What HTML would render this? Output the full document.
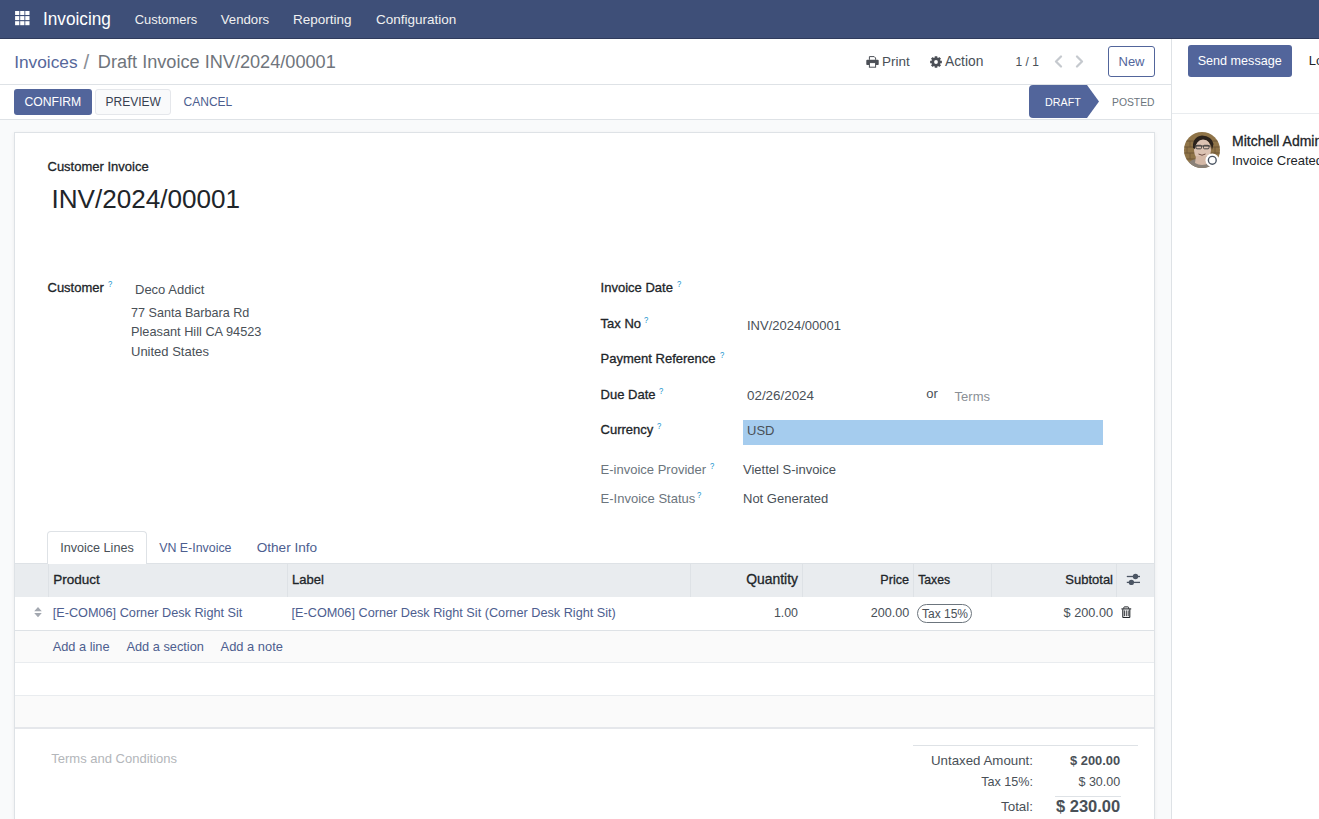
<!DOCTYPE html>
<html><head><meta charset="utf-8"><style>
html,body{margin:0;padding:0;width:1319px;height:819px;overflow:hidden;background:#fff;font-family:"Liberation Sans", sans-serif;}
.t{position:absolute;line-height:1;white-space:nowrap;}
</style></head><body>
<div style="position:absolute;left:0px;top:0px;width:1319px;height:38px;background:#3e4f78;"></div>
<div style="position:absolute;left:0px;top:38px;width:1319px;height:1px;background:#2f3b5c;"></div>
<svg style="position:absolute;left:15px;top:11px" width="16" height="15" viewBox="0 0 16 15"><rect x="0.1" y="0" width="4.2" height="4" fill="#fff"/><rect x="0.1" y="5.1" width="4.2" height="4" fill="#fff"/><rect x="0.1" y="10.2" width="4.2" height="4" fill="#fff"/><rect x="5.2" y="0" width="4.2" height="4" fill="#fff"/><rect x="5.2" y="5.1" width="4.2" height="4" fill="#fff"/><rect x="5.2" y="10.2" width="4.2" height="4" fill="#fff"/><rect x="10.3" y="0" width="4.2" height="4" fill="#fff"/><rect x="10.3" y="5.1" width="4.2" height="4" fill="#fff"/><rect x="10.3" y="10.2" width="4.2" height="4" fill="#fff"/></svg>
<div class="t" style="left:42.60px;top:10px;font-size:18px;font-weight:400;color:#ffffff;transform:scaleX(0.955);transform-origin:0 0;">Invoicing</div>
<div class="t" style="left:134.80px;top:14px;font-size:12.9px;font-weight:400;color:#f1f1f1;">Customers</div>
<div class="t" style="left:220.80px;top:13px;font-size:13.2px;font-weight:400;color:#f1f1f1;">Vendors</div>
<div class="t" style="left:293.00px;top:13px;font-size:13.5px;font-weight:400;color:#f1f1f1;">Reporting</div>
<div class="t" style="left:376.00px;top:13px;font-size:13.5px;font-weight:400;color:#f1f1f1;">Configuration</div>
<div style="position:absolute;left:0px;top:39px;width:1171px;height:45px;background:#fff;"></div>
<div style="position:absolute;left:0px;top:84px;width:1171px;height:1px;background:#dee2e6;"></div>
<div style="position:absolute;left:0px;top:85px;width:1171px;height:34px;background:#fff;"></div>
<div style="position:absolute;left:0px;top:119px;width:1171px;height:1px;background:#dee2e6;"></div>
<div class="t" style="left:14.20px;top:54px;font-size:17.3px;font-weight:400;color:#56679a;">Invoices</div>
<div class="t" style="left:83.60px;top:52px;font-size:20.5px;font-weight:400;color:#8a8f96;">/</div>
<div class="t" style="left:97.80px;top:53px;font-size:18.15px;font-weight:400;color:#6f757c;">Draft Invoice INV/2024/00001</div>
<div class="t" style="left:881.90px;top:55px;font-size:13.5px;font-weight:400;color:#495057;">Print</div>
<div class="t" style="left:945.00px;top:55px;font-size:13.8px;font-weight:400;color:#495057;">Action</div>
<div class="t" style="left:1015.60px;top:56px;font-size:12px;font-weight:400;color:#495057;">1 / 1</div>
<div style="position:absolute;left:1108px;top:46px;width:47px;height:31px;border:1px solid #52659b;border-radius:3px;box-sizing:border-box;background:#fff;"></div>
<div class="t" style="left:1131.50px;top:55px;font-size:13px;font-weight:400;color:#52659b;transform:translateX(-50%);">New</div>
<div style="position:absolute;left:14px;top:89px;width:78px;height:26px;background:#52659b;border-radius:3px;"></div>
<div class="t" style="left:24.40px;top:96px;font-size:12.2px;font-weight:400;color:#fff;">CONFIRM</div>
<div style="position:absolute;left:95px;top:89px;width:76px;height:26px;background:#f9fafb;border:1px solid #e5e7eb;border-radius:3px;box-sizing:border-box;"></div>
<div class="t" style="left:105.60px;top:96px;font-size:12px;font-weight:400;color:#374151;">PREVIEW</div>
<div class="t" style="left:183.60px;top:96px;font-size:12px;font-weight:400;color:#4d5e8f;">CANCEL</div>
<svg style="position:absolute;left:1029px;top:85px" width="72" height="33"><path d="M0 4 Q0 0 4 0 L58 0 L70 16.5 L58 33 L4 33 Q0 33 0 29 Z" fill="#52659b"/></svg>
<div class="t" style="left:1044.60px;top:97px;font-size:11.5px;font-weight:400;color:#fff;transform:scaleX(0.935);transform-origin:0 0;">DRAFT</div>
<div class="t" style="left:1111.60px;top:97px;font-size:11.5px;font-weight:400;color:#6c757d;transform:scaleX(0.9);transform-origin:0 0;">POSTED</div>
<div style="position:absolute;left:0px;top:120px;width:1171px;height:699px;background:#f9fafb;"></div>
<div style="position:absolute;left:14px;top:132px;width:1141px;height:687px;background:#fff;border:1px solid #dee2e6;border-bottom:none;box-sizing:border-box;box-shadow:0 1px 4px rgba(0,0,0,0.06);"></div>
<div class="t" style="left:47.50px;top:160px;font-size:13px;font-weight:400;color:#212529;-webkit-text-stroke:0.3px #212529;">Customer Invoice</div>
<div class="t" style="left:51.50px;top:186px;font-size:26.1px;font-weight:400;color:#212529;">INV/2024/00001</div>
<div class="t" style="left:47.50px;top:281px;font-size:13px;font-weight:400;color:#212529;-webkit-text-stroke:0.3px #212529;">Customer</div>
<div class="t" style="left:107.80px;top:280px;font-size:9px;font-weight:400;color:#1592cc;transform:scaleX(0.85);transform-origin:0 0;">?</div>
<div class="t" style="left:135.00px;top:283px;font-size:13px;font-weight:400;color:#495057;">Deco Addict</div>
<div class="t" style="left:131.00px;top:307px;font-size:12.6px;font-weight:400;color:#495057;">77 Santa Barbara Rd</div>
<div class="t" style="left:131.00px;top:326px;font-size:12.75px;font-weight:400;color:#495057;">Pleasant Hill CA 94523</div>
<div class="t" style="left:131.00px;top:345px;font-size:13px;font-weight:400;color:#495057;">United States</div>
<div class="t" style="left:600.60px;top:281px;font-size:13px;font-weight:400;color:#212529;-webkit-text-stroke:0.3px #212529;">Invoice Date</div>
<div class="t" style="left:676.50px;top:280px;font-size:9px;font-weight:400;color:#1592cc;transform:scaleX(0.85);transform-origin:0 0;">?</div>
<div class="t" style="left:600.60px;top:317px;font-size:13px;font-weight:400;color:#212529;-webkit-text-stroke:0.3px #212529;">Tax No</div>
<div class="t" style="left:643.60px;top:316px;font-size:9px;font-weight:400;color:#1592cc;transform:scaleX(0.85);transform-origin:0 0;">?</div>
<div class="t" style="left:600.60px;top:352px;font-size:13px;font-weight:400;color:#212529;-webkit-text-stroke:0.3px #212529;">Payment Reference</div>
<div class="t" style="left:719.50px;top:351px;font-size:9px;font-weight:400;color:#1592cc;transform:scaleX(0.85);transform-origin:0 0;">?</div>
<div class="t" style="left:600.60px;top:388px;font-size:13px;font-weight:400;color:#212529;-webkit-text-stroke:0.3px #212529;">Due Date</div>
<div class="t" style="left:658.90px;top:387px;font-size:9px;font-weight:400;color:#1592cc;transform:scaleX(0.85);transform-origin:0 0;">?</div>
<div class="t" style="left:600.60px;top:423px;font-size:13px;font-weight:400;color:#212529;-webkit-text-stroke:0.3px #212529;">Currency</div>
<div class="t" style="left:656.50px;top:422px;font-size:9px;font-weight:400;color:#1592cc;transform:scaleX(0.85);transform-origin:0 0;">?</div>
<div class="t" style="left:747.00px;top:319px;font-size:13px;font-weight:400;color:#495057;">INV/2024/00001</div>
<div class="t" style="left:747.00px;top:389px;font-size:13.4px;font-weight:400;color:#495057;">02/26/2024</div>
<div class="t" style="left:926.20px;top:387px;font-size:13px;font-weight:400;color:#495057;">or</div>
<div class="t" style="left:954.60px;top:390px;font-size:13px;font-weight:400;color:#8a8f96;">Terms</div>
<div style="position:absolute;left:743px;top:420px;width:360px;height:25px;background:#a5ccee;"></div>
<div class="t" style="left:747.00px;top:424px;font-size:13px;font-weight:400;color:#495057;">USD</div>
<div class="t" style="left:600.60px;top:463px;font-size:13px;font-weight:400;color:#6c757d;">E-invoice Provider</div>
<div class="t" style="left:709.70px;top:462px;font-size:9px;font-weight:400;color:#1592cc;transform:scaleX(0.85);transform-origin:0 0;">?</div>
<div class="t" style="left:743.00px;top:463px;font-size:13px;font-weight:400;color:#495057;">Viettel S-invoice</div>
<div class="t" style="left:600.60px;top:492px;font-size:13px;font-weight:400;color:#6c757d;">E-Invoice Status</div>
<div class="t" style="left:697.10px;top:491px;font-size:9px;font-weight:400;color:#1592cc;transform:scaleX(0.85);transform-origin:0 0;">?</div>
<div class="t" style="left:743.00px;top:492px;font-size:13px;font-weight:400;color:#495057;">Not Generated</div>
<div style="position:absolute;left:15px;top:563px;width:1139px;height:1px;background:#dee2e6;"></div>
<div style="position:absolute;left:47px;top:531px;width:100px;height:33px;background:#fff;border:1px solid #dee2e6;border-bottom:none;border-radius:4px 4px 0 0;box-sizing:border-box;"></div>
<div class="t" style="left:60.20px;top:542px;font-size:12.6px;font-weight:400;color:#495057;">Invoice Lines</div>
<div class="t" style="left:159.20px;top:542px;font-size:12.4px;font-weight:400;color:#4d5e8f;">VN E-Invoice</div>
<div class="t" style="left:256.70px;top:541px;font-size:13.6px;font-weight:400;color:#4d5e8f;">Other Info</div>
<div style="position:absolute;left:15px;top:564px;width:1139px;height:33px;background:#e9ecef;"></div>
<div style="position:absolute;left:48px;top:564px;width:1px;height:33px;background:#dee2e6;"></div>
<div style="position:absolute;left:287px;top:564px;width:1px;height:33px;background:#dee2e6;"></div>
<div style="position:absolute;left:690px;top:564px;width:1px;height:33px;background:#dee2e6;"></div>
<div style="position:absolute;left:802px;top:564px;width:1px;height:33px;background:#dee2e6;"></div>
<div style="position:absolute;left:913px;top:564px;width:1px;height:33px;background:#dee2e6;"></div>
<div style="position:absolute;left:991px;top:564px;width:1px;height:33px;background:#dee2e6;"></div>
<div style="position:absolute;left:1116px;top:564px;width:1px;height:33px;background:#dee2e6;"></div>
<div class="t" style="left:53.20px;top:573px;font-size:13.5px;font-weight:400;color:#212529;-webkit-text-stroke:0.3px #212529;">Product</div>
<div class="t" style="left:292.00px;top:573px;font-size:13px;font-weight:400;color:#212529;-webkit-text-stroke:0.3px #212529;">Label</div>
<div class="t" style="right:521.00px;top:573px;font-size:13.9px;font-weight:400;color:#212529;-webkit-text-stroke:0.3px #212529;">Quantity</div>
<div class="t" style="right:410.00px;top:574px;font-size:12.6px;font-weight:400;color:#212529;-webkit-text-stroke:0.3px #212529;">Price</div>
<div class="t" style="left:918.20px;top:574px;font-size:12.2px;font-weight:400;color:#212529;-webkit-text-stroke:0.3px #212529;">Taxes</div>
<div class="t" style="right:206.00px;top:573px;font-size:13px;font-weight:400;color:#212529;-webkit-text-stroke:0.3px #212529;">Subtotal</div>
<div style="position:absolute;left:15px;top:597px;width:1139px;height:33px;background:#fff;"></div>
<div style="position:absolute;left:15px;top:630px;width:1139px;height:1px;background:#dee2e6;"></div>
<div class="t" style="left:52.70px;top:607px;font-size:12.7px;font-weight:400;color:#4d5e8f;">[E-COM06] Corner Desk Right Sit</div>
<div class="t" style="left:291.50px;top:607px;font-size:12.7px;font-weight:400;color:#4d5e8f;">[E-COM06] Corner Desk Right Sit (Corner Desk Right Sit)</div>
<div class="t" style="right:521.00px;top:607px;font-size:12.4px;font-weight:400;color:#495057;">1.00</div>
<div class="t" style="right:409.70px;top:607px;font-size:12.6px;font-weight:400;color:#495057;">200.00</div>
<div style="position:absolute;left:917px;top:604px;width:55px;height:19px;border:1px solid #6c757d;border-radius:10px;box-sizing:border-box;"></div>
<div class="t" style="left:922.00px;top:608px;font-size:12px;font-weight:400;color:#495057;">Tax 15%</div>
<div class="t" style="right:206.00px;top:607px;font-size:12.7px;font-weight:400;color:#495057;">$ 200.00</div>
<div style="position:absolute;left:15px;top:631px;width:1139px;height:31px;background:#fafafa;"></div>
<div style="position:absolute;left:15px;top:662px;width:1139px;height:1px;background:#e9ecef;"></div>
<div class="t" style="left:52.70px;top:641px;font-size:12.8px;font-weight:400;color:#4d5e8f;">Add a line</div>
<div class="t" style="left:126.40px;top:641px;font-size:12.8px;font-weight:400;color:#4d5e8f;">Add a section</div>
<div class="t" style="left:220.60px;top:641px;font-size:12.9px;font-weight:400;color:#4d5e8f;">Add a note</div>
<div style="position:absolute;left:15px;top:663px;width:1139px;height:32px;background:#fff;"></div>
<div style="position:absolute;left:15px;top:695px;width:1139px;height:1px;background:#e9ecef;"></div>
<div style="position:absolute;left:15px;top:696px;width:1139px;height:31px;background:#fafafa;"></div>
<div style="position:absolute;left:15px;top:727px;width:1139px;height:2px;background:#e5e7eb;"></div>
<div class="t" style="left:51.30px;top:752px;font-size:13px;font-weight:400;color:#b3b6ba;">Terms and Conditions</div>
<div style="position:absolute;left:913px;top:745px;width:225px;height:1px;background:#dee2e6;"></div>
<div class="t" style="right:286.00px;top:754px;font-size:13.3px;font-weight:400;color:#495057;">Untaxed Amount:</div>
<div class="t" style="right:198.80px;top:755px;font-size:12.9px;font-weight:700;color:#495057;">$ 200.00</div>
<div class="t" style="right:286.00px;top:776px;font-size:12.6px;font-weight:400;color:#495057;">Tax 15%:</div>
<div class="t" style="right:198.80px;top:776px;font-size:12.5px;font-weight:400;color:#495057;">$ 30.00</div>
<div style="position:absolute;left:1055px;top:796px;width:66px;height:1px;background:#dee2e6;"></div>
<div class="t" style="right:286.00px;top:800px;font-size:13.4px;font-weight:400;color:#495057;">Total:</div>
<div class="t" style="right:198.80px;top:798px;font-size:16.5px;font-weight:700;color:#495057;">$ 230.00</div>
<div style="position:absolute;left:1171px;top:39px;width:1px;height:780px;background:#dee2e6;"></div>
<div style="position:absolute;left:1172px;top:39px;width:147px;height:780px;background:#fff;"></div>
<div style="position:absolute;left:1172px;top:113px;width:147px;height:1px;background:#e9ecef;"></div>
<div style="position:absolute;left:1188px;top:45px;width:104px;height:32px;background:#52659b;border-radius:3px;"></div>
<div class="t" style="left:1197.70px;top:55px;font-size:12.6px;font-weight:400;color:#fff;">Send message</div>
<div class="t" style="left:1308.80px;top:54px;font-size:13px;font-weight:400;color:#212529;">Log note</div>
<svg style="position:absolute;left:1184px;top:132px" width="36" height="36" viewBox="0 0 36 36">
<defs><clipPath id="av"><circle cx="18" cy="18" r="18"/></clipPath></defs>
<g clip-path="url(#av)">
<rect width="36" height="36" fill="#8f7448"/>
<path d="M0 9 H36 M0 15 H36 M0 21 H36 M0 27 H36" stroke="#6e5636" stroke-width="1"/>
<path d="M6 9 V15 M28 9 V15 M3 15 V21 M31 15 V21 M6 21 V27 M30 21 V27" stroke="#6e5636" stroke-width="0.8"/>
<path d="M2 36 Q4 28 12 27 L24 27 Q31 28 33 36 Z" fill="#8a8178"/>
<ellipse cx="18.5" cy="18" rx="8.5" ry="11.5" fill="#dcc3b3"/>
<path d="M11 31 Q18 35 25 31 L24 24 L12 24 Z" fill="#d4b8a6"/>
<path d="M9 16 Q8 5 18 3.5 Q28 4 29.5 12 L28 18 Q27 8 19 7.5 Q12 8 11 17 Z" fill="#2a221c"/>
<path d="M10.5 14 H26.5" stroke="#3b3b3b" stroke-width="1.1"/>
<rect x="12" y="13.3" width="5.5" height="3.5" rx="1" fill="none" stroke="#3b3b3b" stroke-width="0.9"/>
<rect x="19.5" y="13.3" width="5.5" height="3.5" rx="1" fill="none" stroke="#3b3b3b" stroke-width="0.9"/>
<path d="M14.5 22 Q18 24.5 21.5 22" stroke="#6a4a40" stroke-width="1" fill="none"/>
</g></svg>
<svg style="position:absolute;left:1205px;top:152.5px" width="15" height="15" viewBox="0 0 15 15"><circle cx="7.3" cy="7.3" r="6.8" fill="#fff"/><circle cx="7.3" cy="7.3" r="3.9" fill="#fff" stroke="#4b5563" stroke-width="1.4"/></svg>
<div class="t" style="left:1232.00px;top:134px;font-size:14px;font-weight:400;color:#212529;-webkit-text-stroke:0.3px #212529;">Mitchell Admin</div>
<div class="t" style="left:1232.00px;top:154px;font-size:13px;font-weight:400;color:#212529;">Invoice Created</div>
<svg style="position:absolute;left:866px;top:55.5px" width="13" height="12" viewBox="0 0 13 12"><path d="M3.4 3.8 V0.6 H8.2 L9.6 2 V3.8" fill="none" stroke="#4b4f56" stroke-width="1"/><path d="M1.3 3.8 H11.7 Q12.7 3.8 12.7 4.8 V8.3 Q12.7 9 12 9 H1 Q0.3 9 0.3 8.3 V4.8 Q0.3 3.8 1.3 3.8 Z" fill="#4b4f56"/><rect x="3.4" y="6.6" width="6.2" height="4.6" fill="#fff" stroke="#4b4f56" stroke-width="1"/></svg>
<svg style="position:absolute;left:930.3px;top:55.5px" width="12" height="12" viewBox="0 0 12 12"><path fill-rule="evenodd" fill="#4b4f56" d="M10.42 4.72 L11.86 4.69 L11.86 7.31 L10.42 7.28 L10.03 8.22 L11.07 9.21 L9.21 11.07 L8.22 10.03 L7.28 10.42 L7.31 11.86 L4.69 11.86 L4.72 10.42 L3.78 10.03 L2.79 11.07 L0.93 9.21 L1.97 8.22 L1.58 7.28 L0.14 7.31 L0.14 4.69 L1.58 4.72 L1.97 3.78 L0.93 2.79 L2.79 0.93 L3.78 1.97 L4.72 1.58 L4.69 0.14 L7.31 0.14 L7.28 1.58 L8.22 1.97 L9.21 0.93 L11.07 2.79 L10.03 3.78 Z M7.9 6 A1.9 1.9 0 1 0 4.1 6 A1.9 1.9 0 1 0 7.9 6 Z"/></svg>
<svg style="position:absolute;left:1053px;top:55px" width="11" height="13" viewBox="0 0 11 13"><path d="M8 1.5 L3 6.5 L8 11.5" fill="none" stroke="#c5c9ce" stroke-width="2.2" stroke-linecap="round" stroke-linejoin="round"/></svg>
<svg style="position:absolute;left:1074px;top:55px" width="11" height="13" viewBox="0 0 11 13"><path d="M3 1.5 L8 6.5 L3 11.5" fill="none" stroke="#c5c9ce" stroke-width="2.2" stroke-linecap="round" stroke-linejoin="round"/></svg>
<svg style="position:absolute;left:33px;top:606px" width="10" height="13" viewBox="0 0 10 13"><path d="M1.2 5.3 L5 1 L8.8 5.3 Z M1.2 6.9 L8.8 6.9 L5 11.3 Z" fill="#a3a8b0"/></svg>
<svg style="position:absolute;left:1126px;top:573px" width="15" height="12" viewBox="0 0 15 12"><path d="M0.8 3.5 H14" stroke="#4b5563" stroke-width="1.3"/><path d="M0.8 9.4 H14" stroke="#4b5563" stroke-width="1.3"/><circle cx="9.5" cy="3.5" r="2.7" fill="#4b5563"/><circle cx="5.4" cy="9.4" r="2.7" fill="#4b5563"/></svg>
<svg style="position:absolute;left:1120.5px;top:606px" width="11" height="13" viewBox="0 0 11 13"><path d="M2.8 2.6 V1.6 Q2.8 0.9 3.5 0.9 H6.9 Q7.6 0.9 7.6 1.6 V2.6" fill="none" stroke="#212529" stroke-width="1"/><path d="M0.4 2.9 H10.2" stroke="#212529" stroke-width="1.1"/><path d="M1.8 3.2 V11 Q1.8 11.5 2.3 11.5 H8.3 Q8.8 11.5 8.8 11 V3.2" fill="none" stroke="#212529" stroke-width="1.1"/><path d="M3.4 4.4 V10.2 M5.3 4.4 V10.2 M7.2 4.4 V10.2" stroke="#212529" stroke-width="0.9"/></svg>
</body></html>
